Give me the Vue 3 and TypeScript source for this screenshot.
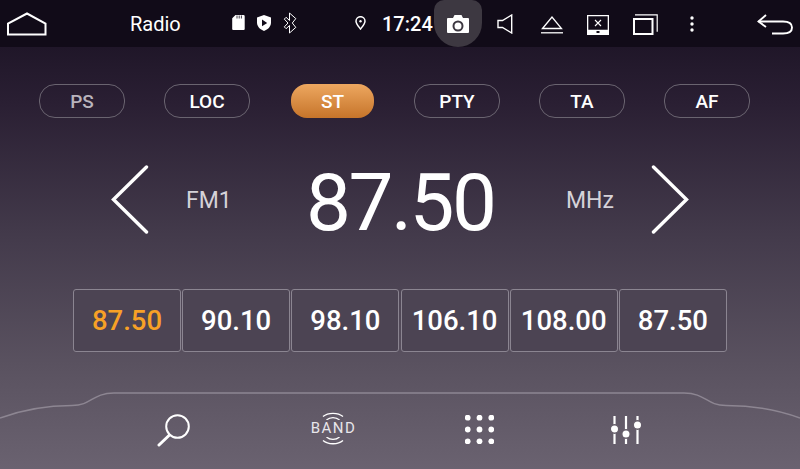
<script setup lang="ts">
const modes = [
  { label: 'PS', state: 'dim' },
  { label: 'LOC', state: '' },
  { label: 'ST', state: 'active' },
  { label: 'PTY', state: '' },
  { label: 'TA', state: '' },
  { label: 'AF', state: '' },
]
const presets = ['87.50', '90.10', '98.10', '106.10', '108.00', '87.50']
const dots = Array.from({ length: 9 }, (_, i) => ({ cx: 2.5 + (i % 3) * 11, cy: 2.5 + Math.floor(i / 3) * 11 }))
</script>

<template>
  <div class="screen">
    <header class="bar">
      <svg class="home" width="40" height="24" viewBox="0 0 40 24" fill="none" stroke="#fff" stroke-width="2"><path d="M1 22.5V11.5L20 1.5l18.5 10v11Z" /></svg>
      <span class="title">Radio</span>
      <svg class="sd" width="13" height="15" viewBox="0 0 13 15"><path fill="#fff" d="M3.5 0H11.5a1.2 1.2 0 0 1 1.2 1.2V13.6A1.2 1.2 0 0 1 11.5 15H1.4A1.2 1.2 0 0 1 .2 13.6V3.3Z" /><path stroke="#120c1a" stroke-width=".8" d="M5 .5v3M7.2.5v3M9.4.5v3" /></svg>
      <svg class="shield" width="14" height="16" viewBox="0 0 14 16"><path fill="#fff" d="M7 0l7 2.4v5.2C14 11.6 11 14.7 7 16 3 14.7 0 11.6 0 7.6V2.4Z" /><path fill="#120c1a" d="M5 4.6 10.2 8 5 11.2Z" /></svg>
      <svg class="bt" width="14" height="22" viewBox="0 0 14 22" fill="none" stroke="#fff" stroke-width="1"><path d="M6.5 1 12.8 6.6 9.3 11l3.5 4.4L6.5 21v-7.5l-3.4 3.2-1.8-1.8L5 11 1.3 7.1l1.8-1.8 3.4 3.2Z" /></svg>
      <svg class="pin" width="11" height="14" viewBox="0 0 11 14" fill="none" stroke="#fff" stroke-width="1.5"><path d="M5.5 13C3 9.8 1 7.6 1 5.2a4.5 4.5 0 0 1 9 0C10 7.6 8 9.8 5.5 13Z" /><circle cx="5.5" cy="5.2" r="1.2" fill="#fff" stroke="none" /></svg>
      <span class="time">17:24</span>
      <div class="cam">
        <svg width="22" height="18" viewBox="0 0 22 18"><path fill="#fff" fill-rule="evenodd" d="M1 3h5l1.5-3h7L16 3h5a1 1 0 0 1 1 1v13a1 1 0 0 1-1 1H1a1 1 0 0 1-1-1V4a1 1 0 0 1 1-1Zm10 2.5a5.5 5.5 0 1 0 0 11 5.5 5.5 0 0 0 0-11Zm0 2a3.5 3.5 0 1 1 0 7 3.5 3.5 0 0 1 0-7Z" /></svg>
      </div>
      <svg class="spk" width="16" height="20" viewBox="0 0 16 20" fill="none" stroke="#fff" stroke-width="1.4"><path d="M1 6.5h4.5L14.7 1v18L5.5 13.5H1Z" /></svg>
      <svg class="eject" width="22" height="18" viewBox="0 0 22 18" fill="none" stroke="#fff" stroke-width="1.3"><path d="M1.500 12.500 11 1l9.500 11.500Z" /><path d="M0 16.800h22" /></svg>
      <svg class="scr" width="22" height="20" viewBox="0 0 22 20"><path fill="#fff" fill-rule="evenodd" d="M0 0h22v20H0Zm1.300 1.300v13.400h19.400V1.300ZM9.500 16v2h3v-2Z" /><path stroke="#fff" stroke-width="1.100" d="M8 5l6 6M14 5l-6 6" /></svg>
      <svg class="win" width="25" height="21" viewBox="0 0 25 21" fill="none" stroke="#fff"><path stroke-width="2" d="M1 5h18.500v15H1Z" /><path stroke-width="1.200" d="M2 .8h22.200v17" /></svg>
      <svg class="more" width="4" height="16" viewBox="0 0 4 16" fill="#fff"><circle cx="2" cy="2" r="1.700" /><circle cx="2" cy="8" r="1.700" /><circle cx="2" cy="14" r="1.700" /></svg>
      <svg class="back" width="36" height="21" viewBox="0 0 36 21" fill="none" stroke="#fff" stroke-width="1.900"><path d="M9 1 1.500 7.500 9 13" /><path d="M1.500 7.500H26c6 0 9 2.500 9 6s-3 6-9 6H15" /></svg>
    </header>

    <section class="modes">
      <button v-for="m in modes" :key="m.label" class="mode" :class="m.state">{{ m.label }}</button>
    </section>

    <section class="tuner">
      <svg class="arrow-l" width="38" height="70" viewBox="0 0 38 70" fill="none" stroke="#fff" stroke-width="3.400" stroke-linecap="round"><path d="M35.500 2 2.500 34.500 35.500 67" /></svg>
      <span class="band">FM1</span>
      <span class="freq">87.50</span>
      <span class="unit">MHz</span>
      <svg class="arrow-r" width="38" height="70" viewBox="0 0 38 70" fill="none" stroke="#fff" stroke-width="3.400" stroke-linecap="round"><path d="M2.500 2 35.500 34.500 2.500 67" /></svg>
    </section>

    <section class="presets">
      <div v-for="(p, i) in presets" :key="i" class="preset" :class="{ on: i === 0 }">{{ p }}</div>
    </section>

    <footer class="dock">
      <svg class="curve" width="800" height="36" viewBox="0 0 800 36" fill="none" stroke="#8d8692" stroke-width="1.400"><path d="M0 26C22 18 45 13.500 72 13.500 92 13.500 92 1 114 1H684C706 1 706 13.500 726 13.500 752 13.500 778 18 800 26" /></svg>
      <svg class="search" width="34" height="33" viewBox="0 0 34 33" fill="none" stroke="#fff"><circle cx="20.500" cy="12.500" r="11.300" stroke-width="2" /><path stroke-width="3" stroke-linecap="round" d="M12.500 21 2 31" /></svg>
      <div class="bandbtn">
        <svg width="24" height="8" viewBox="0 0 24 8" fill="none" stroke="#fff" stroke-width="1.300"><path d="M2 4.500C7 .2 17 .2 22 4.500M5.500 8C9 4.800 15 4.800 18.500 8" /></svg>
        <span>BAND</span>
        <svg width="24" height="8" viewBox="0 0 24 8" fill="none" stroke="#fff" stroke-width="1.300"><path d="M2 3.500C7 7.800 17 7.800 22 3.500M5.500 0C9 3.200 15 3.200 18.500 0" /></svg>
      </div>
      <svg class="grid9" width="29" height="29" viewBox="0 0 27 27" fill="#fff"><circle v-for="(d, i) in dots" :key="i" :cx="d.cx" :cy="d.cy" r="2.700" /></svg>
      <svg class="sliders" width="30" height="28" viewBox="0 0 30 28" fill="#fff" stroke="#fff"><path stroke-width="2.200" d="M3.500 0v28M15 0v28M26.500 0v28" /><g stroke="#675f6b" stroke-width="1.400"><circle cx="3.500" cy="13" r="4.200" /><circle cx="15" cy="18" r="4.200" /><circle cx="26.500" cy="9" r="4.200" /></g></svg>
    </footer>
  </div>
</template>

<style scoped>
.screen {
  width: 800px;
  height: 469px;
  overflow: hidden;
  display: flex;
  flex-direction: column;
  font-family: Roboto, "Liberation Sans", sans-serif;
  color: #fff;
  background: linear-gradient(180deg, #170f20 0%, #2a1f33 22%, #433a4b 50%, #5a5260 78%, #6a6270 100%);
}
.bar {
  height: 47px;
  flex: none;
  display: flex;
  align-items: center;
  background: #110b18;
}
.bar svg { flex: none; }
.home { margin-left: 7px; }
.title { margin-left: 83px; width: 52px; font-size: 20px; }
.sd { margin-left: 50px; margin-top: -2px; }
.shield { margin-left: 12px; margin-top: -2px; }
.bt { margin-left: 12px; margin-top: -1px; }
.pin { margin-left: 58px; margin-top: -1px; }
.time { margin-left: 16px; width: 52px; font-size: 20px; font-weight: 500; white-space: nowrap; }
.cam {
  width: 48px;
  height: 47px;
  flex: none;
  display: flex;
  align-items: center;
  justify-content: center;
  background: #3d3841;
  border-radius: 10px 10px 24px 24px;
}
.spk { margin-left: 15px; }
.eject { margin-left: 28px; margin-top: 2px; }
.scr { margin-left: 24px; margin-top: 2px; }
.win { margin-left: 24px; margin-top: 2px; }
.more { margin-left: 32px; }
.back { margin-left: 63px; margin-top: 2px; }

.modes {
  margin: 37px 0 0 39px;
  display: flex;
  gap: 39px;
}
.mode {
  width: 86px;
  height: 34px;
  padding: 0;
  box-sizing: border-box;
  border: 1px solid #6a6470;
  border-radius: 16px;
  background: transparent;
  color: #fff;
  font-family: inherit;
  font-size: 19px;
  font-weight: 500;
}
.mode.dim { color: #b9b4bd; }
.mode.active {
  width: 83px;
  margin: 0 1px 0 2px;
  border: none;
  background: linear-gradient(180deg, #eda760 0%, #c6742a 100%);
}

.tuner {
  margin-top: 47px;
  height: 70px;
  display: flex;
  align-items: center;
}
.arrow-l { margin-left: 111px; flex: none; }
.band { margin-left: 37px; width: 46px; font-size: 23px; color: #d5d2d8; }
.freq { margin: 6px 0 0 74px; width: 189px; font-size: 80px; line-height: 70px; letter-spacing: -2.500px; white-space: nowrap; }
.unit { margin-left: 71px; width: 48px; font-size: 23px; color: #d5d2d8; }
.arrow-r { margin-left: 37px; flex: none; }

.presets {
  margin: 54px 0 0 73px;
  display: flex;
  gap: 1.200px;
}
.preset {
  width: 108px;
  height: 63px;
  box-sizing: border-box;
  display: flex;
  align-items: center;
  justify-content: center;
  border: 1px solid #8b8591;
  border-radius: 3px;
  background: #4c4453;
  font-size: 27.500px;
  font-weight: 500;
}
.preset.on { color: #f7a126; }

.dock {
  position: relative;
  flex: 1;
  margin-top: 40px;
  display: flex;
  align-items: flex-start;
  padding: 22px 0 0 157px;
}
.curve { position: absolute; left: 0; top: 0; }
.dock > svg:not(.curve) { flex: none; }
.bandbtn {
  margin-left: 120px;
  width: 44px;
  margin-top: -2px;
  display: flex;
  flex-direction: column;
  align-items: center;
  font-size: 15px;
  line-height: 17px;
  letter-spacing: 1.400px;
}
.bandbtn svg { display: block; }
.bandbtn span { margin-right: -1px; color: #e8e6ea; }
.grid9 { margin-left: 110px; margin-top: 1px; }
.sliders { margin-left: 117px; margin-top: 2px; }
</style>
